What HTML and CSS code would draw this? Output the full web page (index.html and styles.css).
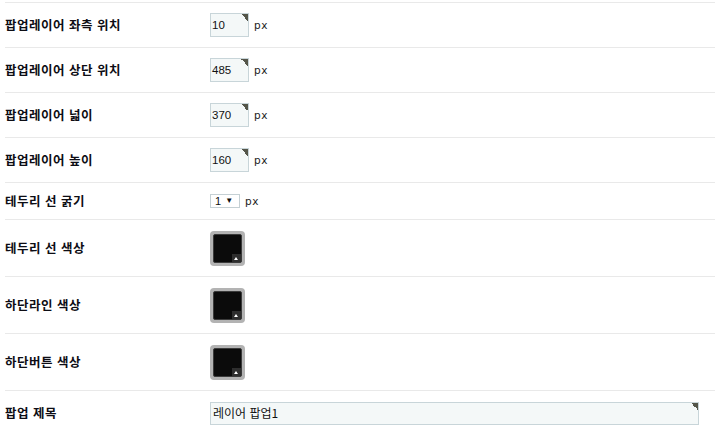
FILE: index.html
```html
<!DOCTYPE html>
<html lang="ko">
<head>
<meta charset="utf-8">
<title>팝업레이어 설정</title>
<link rel="stylesheet" href="styles.css">
</head>
<body>
<div class="form">
  <div class="row">
    <div class="label">팝업레이어 좌측 위치</div>
    <div class="field"><span class="input num">10</span><span class="unit">px</span></div>
  </div>
  <div class="row">
    <div class="label">팝업레이어 상단 위치</div>
    <div class="field"><span class="input num">485</span><span class="unit">px</span></div>
  </div>
  <div class="row">
    <div class="label">팝업레이어 넓이</div>
    <div class="field"><span class="input num">370</span><span class="unit">px</span></div>
  </div>
  <div class="row">
    <div class="label">팝업레이어 높이</div>
    <div class="field"><span class="input num">160</span><span class="unit">px</span></div>
  </div>
  <div class="row row-select">
    <div class="label">테두리 선 굵기</div>
    <div class="field"><span class="select">1 <span class="arrow">▼</span></span><span class="unit">px</span></div>
  </div>
  <div class="row row-color">
    <div class="label">테두리 선 색상</div>
    <div class="field"><span class="swatch"><span class="swatch-inner"><span class="swatch-btn"></span></span></span></div>
  </div>
  <div class="row row-color">
    <div class="label">하단라인 색상</div>
    <div class="field"><span class="swatch"><span class="swatch-inner"><span class="swatch-btn"></span></span></span></div>
  </div>
  <div class="row row-color">
    <div class="label">하단버튼 색상</div>
    <div class="field"><span class="swatch"><span class="swatch-inner"><span class="swatch-btn"></span></span></span></div>
  </div>
  <div class="row">
    <div class="label">팝업 제목</div>
    <div class="field"><span class="input wide">레이어 팝업1</span></div>
  </div>
</div>
</body>
</html>
```

FILE: styles.css
```css
html, body {
  margin: 0;
  padding: 0;
  background: #ffffff;
}

.form {
  padding: 2px 0 0 5px;
  font-family: "Noto Sans CJK KR", "Noto Sans", sans-serif;
}

.row {
  display: grid;
  grid-template-columns: 205px 1fr;
  align-items: center;
  min-height: 44px;
  border-top: 1px solid #e9e9e9;
}

.row-select {
  min-height: 36px;
}

.row-color {
  min-height: 56px;
}

.label {
  font-size: 12.5px;
  font-weight: 700;
  color: #0d0d14;
  letter-spacing: 0.5px;
  line-height: 14px;
}

.field {
  display: flex;
  align-items: center;
  gap: 5px;
}

.input {
  box-sizing: border-box;
  height: 24px;
  border: 1px solid #c8d5d9;
  background: #f4f8f8 linear-gradient(to bottom left, #55564a 50%, transparent 50%) no-repeat right top / 7px 7px;
  display: flex;
  align-items: center;
  padding-left: 1px;
  color: #111111;
  font-size: 12px;
  line-height: 14px;
}

.num {
  width: 39px;
  font-family: "Liberation Sans", Arial, sans-serif;
  font-size: 11.5px;
}

.wide {
  width: 489px;
  height: 23px;
  padding-left: 2px;
}

.unit {
  font-family: "DejaVu Sans", sans-serif;
  font-size: 10.5px;
  color: #222222;
  letter-spacing: 0.5px;
}

.select {
  box-sizing: border-box;
  width: 30px;
  height: 14px;
  border: 1px solid #c5d0d4;
  background: #ffffff;
  display: flex;
  align-items: center;
  padding-left: 4px;
  font-family: "Liberation Sans", Arial, sans-serif;
  font-size: 11px;
  color: #111111;
  line-height: 12px;
}

.arrow {
  font-size: 8px;
  margin-left: 4px;
}

.swatch {
  box-sizing: border-box;
  width: 35px;
  height: 35px;
  border-radius: 4px;
  background: #b3b3b3;
  padding: 3px;
  display: block;
}

.swatch-inner {
  box-sizing: border-box;
  display: flex;
  justify-content: flex-end;
  align-items: flex-end;
  width: 100%;
  height: 100%;
  background: #0b0b0b;
  border: 1px solid #3b3b3b;
  border-radius: 2px;
}

.swatch-btn {
  display: block;
  width: 9px;
  height: 8px;
  background: #2e2e2e;
  position: relative;
}

.swatch-btn::after {
  content: "";
  position: absolute;
  left: 2px;
  top: 3px;
  border-left: 2.5px solid transparent;
  border-right: 2.5px solid transparent;
  border-bottom: 3px solid #ffffff;
}
```
